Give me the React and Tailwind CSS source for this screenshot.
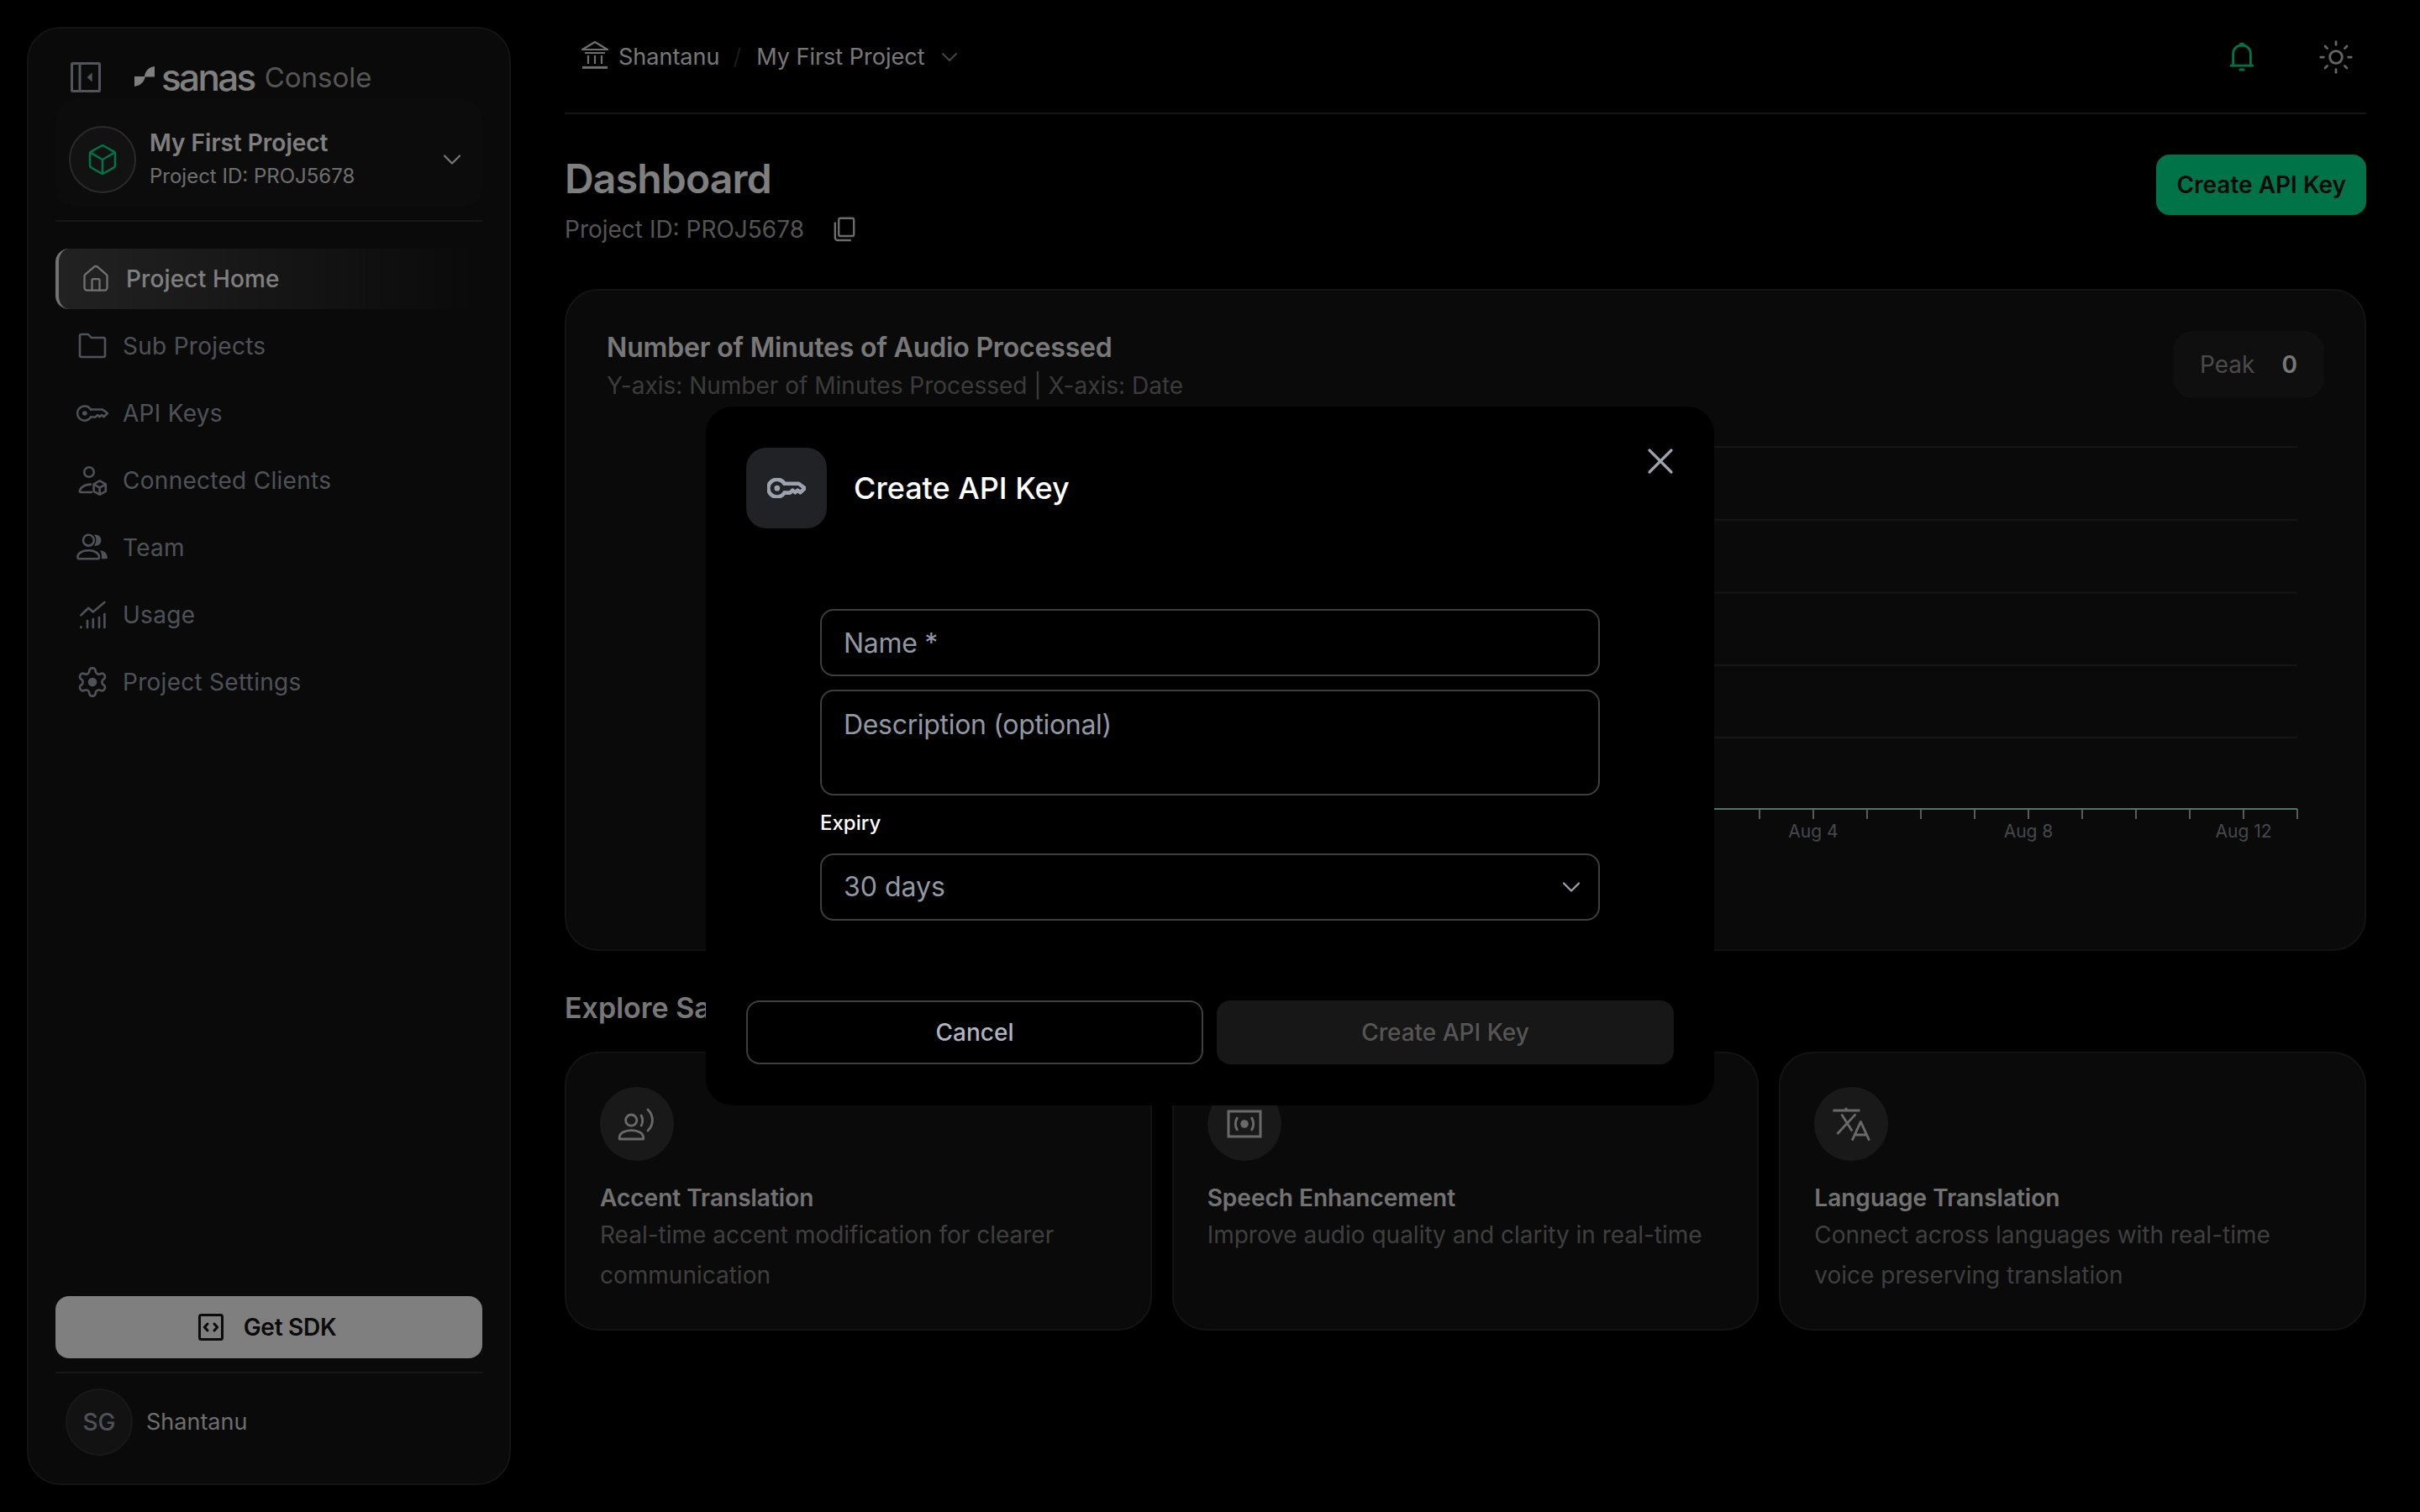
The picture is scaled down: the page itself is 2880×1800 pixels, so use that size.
import React from "react";
import { ChevronDown, Box, Sun, X, House } from "lucide-react";

const KeyIcon = ({ w = 19, sw = 2.5 }) => (
  <svg width={w} height={w * 0.53} viewBox="0 0 38 20" fill="none" stroke="currentColor" strokeWidth={sw} strokeLinejoin="round" strokeLinecap="round">
    <path d="M17 5.5A8.6 8.6 0 1 0 17 14.5" />
    <circle cx="9.8" cy="10" r="2.8" fill="currentColor" stroke="none" />
    <path d="M17 5.5H31L37 10L32.5 14.2L30 12L27.5 14.2L25 12L22.5 14.5H17" />
  </svg>
);

const FolderIcon = () => (
  <svg width="20" height="20" viewBox="0 0 20 20" fill="none" stroke="currentColor" strokeWidth="1.3" strokeLinejoin="round">
    <path d="M2.5 4a1 1 0 0 1 1-1h4l1.8 2h7.2a1 1 0 0 1 1 1v9.5a1 1 0 0 1-1 1h-13a1 1 0 0 1-1-1z" />
  </svg>
);
const ClientsIcon = () => (
  <svg width="20" height="20" viewBox="0 0 20 20" fill="none" stroke="currentColor" strokeWidth="1.3" strokeLinejoin="round" strokeLinecap="round">
    <circle cx="8" cy="5" r="2.9" />
    <path d="M9.5 17H3.2c-.7 0-1-.6-.7-1.2C3.4 13.8 5.6 12.4 9 12.3" />
    <path d="M14.3 10.2l3.6 2v4.2l-3.6 2-3.5-2v-4.2zM10.9 12.3l3.4 2 3.5-2M14.3 14.3v4" />
  </svg>
);
const TeamIcon = () => (
  <svg width="20" height="20" viewBox="0 0 20 20" fill="none" stroke="currentColor" strokeWidth="1.3" strokeLinejoin="round">
    <circle cx="7.7" cy="5.6" r="3.2" />
    <path d="M1.2 15.8c0-2.6 2.9-4.2 6.4-4.2s6.4 1.6 6.4 4.2c0 .5-.3.8-.8.8H2c-.5 0-.8-.3-.8-.8z" />
    <path fill="currentColor" stroke="none" d="M11 2.3c2.7-.3 4.2 1.4 4.2 3.3 0 1.9-1.5 3.5-4.2 3.3 1.6-1.7 1.6-4.9 0-6.6zM14.6 11.5c2.4.4 4.3 1.9 4.3 4.5 0 .4-.2.6-.6.6h-2.9c.4-1.9-.1-3.6-.8-5.1z" />
  </svg>
);
const UsageIcon = () => (
  <svg width="20" height="20" viewBox="0 0 20 20" fill="none" stroke="currentColor" strokeWidth="1.3" strokeLinecap="round" strokeLinejoin="round">
    <path d="M3.2 10.2L7.6 5.9L10.4 8.3L17.2 2.5" />
    <path d="M3.2 17.5v-.4M7 17.5v-4M10.4 17.5v-5M14 17.5v-6M17.2 17.5v-8" />
  </svg>
);
const GearIcon = () => (
  <svg width="20" height="20" viewBox="0 0 24 24" fill="none" stroke="currentColor" strokeWidth="1.6" strokeLinejoin="round">
    <path d="M12.22 2h-.44a2 2 0 0 0-2 2v.18a2 2 0 0 1-1 1.73l-.43.25a2 2 0 0 1-2 0l-.15-.08a2 2 0 0 0-2.73.73l-.22.38a2 2 0 0 0 .73 2.73l.15.1a2 2 0 0 1 1 1.72v.51a2 2 0 0 1-1 1.74l-.15.09a2 2 0 0 0-.73 2.73l.22.38a2 2 0 0 0 2.73.73l.15-.08a2 2 0 0 1 2 0l.43.25a2 2 0 0 1 1 1.73V20a2 2 0 0 0 2 2h.44a2 2 0 0 0 2-2v-.18a2 2 0 0 1 1-1.73l.43-.25a2 2 0 0 1 2 0l.15.08a2 2 0 0 0 2.73-.73l.22-.39a2 2 0 0 0-.73-2.73l-.15-.08a2 2 0 0 1-1-1.74v-.5a2 2 0 0 1 1-1.74l.15-.09a2 2 0 0 0 .73-2.73l-.22-.38a2 2 0 0 0-2.73-.73l-.15.08a2 2 0 0 1-2 0l-.43-.25a2 2 0 0 1-1-1.73V4a2 2 0 0 0-2-2z" />
    <circle cx="12" cy="12" r="3.2" fill="currentColor" stroke="none" />
  </svg>
);

const NavRow = ({ icon, label }) => (
  <div className="flex h-9 items-center gap-2 px-3 text-sm tracking-[0.01em] text-[#9ca3af]">
    <span className="flex h-5 w-5 items-center justify-center">{icon}</span>
    <span>{label}</span>
  </div>
);

const Sidebar = () => (
  <aside className="ml-4 mt-4 flex h-[868px] w-[288px] shrink-0 flex-col rounded-[20px] border border-[#272727] bg-[#141414] px-4 pt-4 pb-[16.5px]">
    <div className="flex h-[26px] items-center gap-5 pl-[9px]">
      <svg width="18" height="18" viewBox="0 0 18 18" className="text-[#a3a8b4]" fill="none" stroke="currentColor" strokeWidth="1.5">
        <rect x="0.75" y="0.75" width="16.5" height="16.5" rx="0.5" />
        <path d="M5.5 1v16" />
        <path d="M12.8 6.2v5.6L9.8 9z" fill="currentColor" stroke="none" />
      </svg>
      <div className="flex items-center">
        <svg width="12" height="12" viewBox="0 0 12 12" className="mt-[-1px] text-[#ffffff]" fill="currentColor">
          <path d="M0 6H6C6.3 3 8.5 .4 12 0V6.3H6.4C5.8 9 4 11.5 0 12Z" />
        </svg>
        <span className="ml-1 text-[22px] leading-[26px] font-medium tracking-[-0.06em] text-white">sanas</span>
        <span className="ml-[6px] text-[16.5px] leading-[26px] text-[#aaaaaa]">Console</span>
      </div>
    </div>
    <div className="flex h-16 items-start rounded-xl bg-[#181818] px-2 pt-4">
      <div className="flex h-10 w-10 shrink-0 items-center justify-center rounded-full border border-[#555555] bg-[#242424] text-[#00e991]">
        <Box size={20} strokeWidth={1.5} />
      </div>
      <div className="ml-2 flex min-w-0 flex-1 flex-col">
        <span className="text-sm leading-5 font-semibold text-white">My First Project</span>
        <span className="text-xs leading-5 text-[#dcdcdc]">Project ID: PROJ5678</span>
      </div>
      <ChevronDown size={18} strokeWidth={1.5} className="mt-[11px] mr-px text-[#eeeeee]" />
    </div>
    <div className="mt-2 mb-4 border-t border-[#2c2c2c]" />
    <nav className="flex flex-col gap-1">
      <div className="flex h-9 items-center gap-2 rounded-l-lg border-l-2 border-[#e5e5e5] bg-gradient-to-r from-[#444444] to-transparent px-3 text-sm font-medium tracking-[0.005em] text-white">
        <span className="flex h-5 w-5 items-center justify-center text-[#e5e5e5]"><House size={18} strokeWidth={1.5} /></span>
        <span>Project Home</span>
      </div>
      <NavRow icon={<FolderIcon />} label="Sub Projects" />
      <NavRow icon={<KeyIcon />} label="API Keys" />
      <NavRow icon={<ClientsIcon />} label="Connected Clients" />
      <NavRow icon={<TeamIcon />} label="Team" />
      <NavRow icon={<UsageIcon />} label="Usage" />
      <NavRow icon={<GearIcon />} label="Project Settings" />
    </nav>
    <button className="mt-auto flex h-[37px] w-full items-center justify-center gap-[11px] rounded-lg bg-white text-sm font-semibold tracking-[-0.01em] text-[#141414]">
      <svg width="15" height="16" viewBox="0 0 15 16" className="mr-px" fill="none" stroke="currentColor" strokeWidth="1.5" strokeLinejoin="round" strokeLinecap="round">
        <rect x="0.75" y="0.75" width="13.5" height="14.5" rx="1" />
        <path d="M5.5 6L3.7 8L5.5 10M9.5 6L11.3 8L9.5 10" />
      </svg>
      <span className="mr-[2px]">Get SDK</span>
    </button>
    <div className="mt-2 border-t border-[#2c2c2c]" />
    <div className="mt-[9px] flex items-center gap-2 pl-1.5">
      <div className="flex h-10 w-10 items-center justify-center rounded-full border border-[#303030] bg-[#242424] text-sm font-medium text-[#9ca3af]">SG</div>
      <span className="text-[13.5px] text-[#dcdcdc]">Shantanu</span>
    </div>
  </aside>
);

const ticks = [1006, 974, 942, 910, 878, 846, 814, 782, 750, 718, 686, 654, 622, 590, 558, 526, 494, 462, 430, 398, 366, 334, 302, 270, 238, 206, 174, 142, 110, 78];
const grid = [16.5, 60, 103.3, 146.5, 189.5];

const Chart = () => (
  <svg width="1022" height="258" viewBox="0 0 1022 258" className="mt-[12.5px] block">
    {grid.map((y) => (
      <line key={y} x1="70" x2="1006" y1={y} y2={y} stroke="#2a2a2a" strokeWidth="1" />
    ))}
    {ticks.map((x) => (
      <line key={x} x1={x} x2={x} y1="232" y2="238" stroke="#b4b4b4" strokeWidth="1" />
    ))}
    <line x1="70" x2="1006" y1="232" y2="232" stroke="#9fe8d0" strokeWidth="1" />
    {[[718, "Aug 4"], [846, "Aug 8"], [974, "Aug 12"]].map(([x, t]) => (
      <text key={t} x={x} y="249" textAnchor="middle" fontSize="10.5" fill="#8b8f98" fontFamily="Inter, sans-serif">{t}</text>
    ))}
  </svg>
);

const AccentIcon = () => (
  <svg width="24" height="24" viewBox="0 0 24 24" fill="none" stroke="currentColor" strokeWidth="1.4" strokeLinecap="round" strokeLinejoin="round">
    <circle cx="8.6" cy="9.8" r="3.3" />
    <path d="M1.6 21V20c0-2.5 3-4.2 7.1-4.2s7.1 1.7 7.1 4.2v1z" />
    <path d="M14.6 7c.9 1.8.9 4.2 0 6M18.5 3.5c3.6 3.5 3.6 9 0 12.5" />
  </svg>
);
const SpeechIcon = () => (
  <svg width="24" height="24" viewBox="0 0 24 24" fill="none" stroke="currentColor" strokeWidth="1.5" strokeLinecap="round">
    <rect x="2.5" y="4.5" width="19" height="15" />
    <circle cx="12" cy="12" r="2.4" fill="currentColor" stroke="none" />
    <path d="M7.6 8.6c-1.2 2-1.2 4.8 0 6.8M16.4 8.6c1.2 2 1.2 4.8 0 6.8" />
  </svg>
);
const LanguageIcon = () => (
  <svg width="24" height="24" viewBox="0 0 24 24" fill="none" stroke="currentColor" strokeWidth="1.4" strokeLinejoin="round">
    <path d="M1.2 4H17.2M9 2.4V4" />
    <path d="M6.3 6.2L12.6 16.2M3.7 18L14.7 6.2" />
    <path d="M12.6 21.8L17.7 10.7L22.8 21.8M14.7 18.5H20.8" />
  </svg>
);

const Feature = ({ icon, title, desc }) => (
  <div className="h-[166px] rounded-[20px] border border-[#272727] bg-[#141414] p-5">
    <div className="flex h-11 w-11 items-center justify-center rounded-full bg-[#333333] text-[#d4d4d4]">{icon}</div>
    <h3 className="mt-3 text-sm leading-5 font-semibold text-[#e5e5e5]">{title}</h3>
    <p className="text-sm leading-6 text-[#7e7e7e]">{desc}</p>
  </div>
);

const Main = () => (
  <main className="ml-8 w-[1072px] shrink-0">
    <header className="flex h-[68px] items-center justify-between border-b border-[#2a2a2a] pt-px pr-[7px] pl-2.5">
      <div className="flex items-center text-[13.5px] text-[#eeeeee]">
        <svg width="18" height="18" viewBox="0 0 18 18" className="mt-[-2px] mr-[5px] ml-[-1px] text-[#dddddd]" fill="none" stroke="currentColor" strokeWidth="1.1" strokeLinejoin="round">
          <path d="M9 1L16.5 5.5H1.5z" />
          <path d="M3 7.5H15M5 9v5M9 9v5M13 9v5" />
          <path d="M1.5 16.2h15" strokeWidth="1.5" />
        </svg>
        <span>Shantanu</span>
        <span className="mx-[8px] text-[#333333]">/</span>
        <span className="ml-[1px]">My First Project</span>
        <ChevronDown size={16} strokeWidth={1.5} className="ml-[6.5px] text-[#8a8a8a]" />
      </div>
      <div className="flex items-center gap-9">
        <svg width="18" height="18" viewBox="0 0 18 18" className="text-[#00e991]" fill="none" stroke="currentColor" strokeWidth="1.4" strokeLinecap="round" strokeLinejoin="round">
          <path d="M3.8 14V7.2C3.8 4 6 2 9 2s5.2 2 5.2 5.2V14" />
          <path d="M2.6 14.1h12.8" />
          <path d="M8.2 1.2h1.6M7.9 16.5h2.2" />
        </svg>
        <Sun size={22} strokeWidth={1.5} className="text-[#cccccc]" />
      </div>
    </header>
    <div className="mt-[22.5px] flex items-start justify-between">
      <div>
        <h1 className="text-2xl leading-8 font-semibold tracking-[-0.4px] text-white">Dashboard</h1>
        <div className="mt-0.5 flex items-center gap-4 text-sm leading-6 text-[#a8a8a8]">
          <span>Project ID: PROJ5678</span>
          <svg width="16" height="16" viewBox="0 0 16 16" className="text-[#d4d4d4]" fill="none" stroke="currentColor" strokeWidth="1.2" strokeLinejoin="round">
            <rect x="4.6" y="1.4" width="9" height="10.6" rx="1" />
            <path d="M2.4 3.8V13a1.5 1.5 0 0 0 1.5 1.5h8" />
          </svg>
        </div>
      </div>
      <button className="mt-[1.5px] h-9 rounded-lg bg-[#00e991] px-3 text-sm font-semibold text-[#141414]">Create API Key</button>
    </div>
    <section className="mt-[23.5px] h-[394px] rounded-[20px] border border-[#272727] bg-[#141414] p-6">
      <div className="flex h-10 items-start justify-between">
        <div>
          <h2 className="text-base leading-5 font-semibold tracking-[-0.08px] text-[#f0f0f0]">Number of Minutes of Audio Processed</h2>
          <p className="mt-[2.5px] text-sm leading-5 text-[#777777]">Y-axis: Number of Minutes Processed | X-axis: Date</p>
        </div>
        <div className="flex h-10 w-[90px] items-center gap-4 rounded-xl bg-[#1e1e1e] pl-4 text-sm">
          <span className="text-[#949494]">Peak</span>
          <span className="font-semibold text-[#f0f0f0]">0</span>
        </div>
      </div>
      <Chart />
    </section>
    <h2 className="mt-5 text-[17px] leading-7 font-semibold text-[#eeeeee]">Explore Sanas Features</h2>
    <div className="mt-3 grid grid-cols-3 gap-3">
      <Feature icon={<AccentIcon />} title="Accent Translation" desc="Real-time accent modification for clearer communication" />
      <Feature icon={<SpeechIcon />} title="Speech Enhancement" desc="Improve audio quality and clarity in real-time" />
      <Feature icon={<LanguageIcon />} title="Language Translation" desc="Connect across languages with real-time voice preserving translation" />
    </div>
  </main>
);

const Modal = () => (
  <div className="absolute inset-0 flex items-center justify-center bg-black/50">
    <div className="relative h-[416px] w-[600px] rounded-2xl bg-black px-6 pt-[24.5px]">
      <button className="absolute top-[20.5px] right-5 text-[#9ca3af]"><X size={26} strokeWidth={1.5} className="m-[-1px]" /></button>
      <div className="flex items-center gap-4">
        <div className="flex h-12 w-12 items-center justify-center rounded-xl bg-[#212225] text-[#9ca3af]">
          <KeyIcon w={23} sw={3.8} />
        </div>
        <h2 className="text-lg font-medium text-white">Create API Key</h2>
      </div>
      <form className="mx-11 mt-12 flex flex-col">
        <input placeholder="Name *" className="h-10 rounded-lg border border-[#3f3f3f] bg-transparent px-[13px] text-base tracking-[-0.01em] text-white outline-none placeholder:text-[#9298a4]" />
        <textarea placeholder="Description (optional)" className="mt-2 h-[63px] resize-none rounded-lg border border-[#3f3f3f] bg-transparent px-[13px] py-2 text-base tracking-[-0.01em] text-white outline-none placeholder:text-[#9298a4]" />
        <label className="mt-[8.5px] text-xs leading-4 font-medium text-white">Expiry</label>
        <div className="mt-2.5 flex h-10 items-center justify-between rounded-lg border border-[#3f3f3f] pr-[7px] pl-[13px] text-base text-[#9298a4]">
          <span>30 days</span>
          <ChevronDown size={18} strokeWidth={1.5} className="text-[#9ca3af]" />
        </div>
      </form>
      <div className="mt-[47.5px] grid grid-cols-2 gap-2">
        <button className="h-[38px] rounded-lg border border-[#3f3f3f] text-sm font-medium text-[#b0b5c2]">Cancel</button>
        <button disabled className="h-[38px] rounded-lg bg-[#171717] text-sm font-medium text-[#555555]">Create API Key</button>
      </div>
    </div>
  </div>
);

export default function App() {
  return (
    <div className="relative flex h-[900px] w-[1440px] overflow-hidden bg-black font-[Inter,sans-serif] [zoom:2]">
      <Sidebar />
      <Main />
      <Modal />
    </div>
  );
}
